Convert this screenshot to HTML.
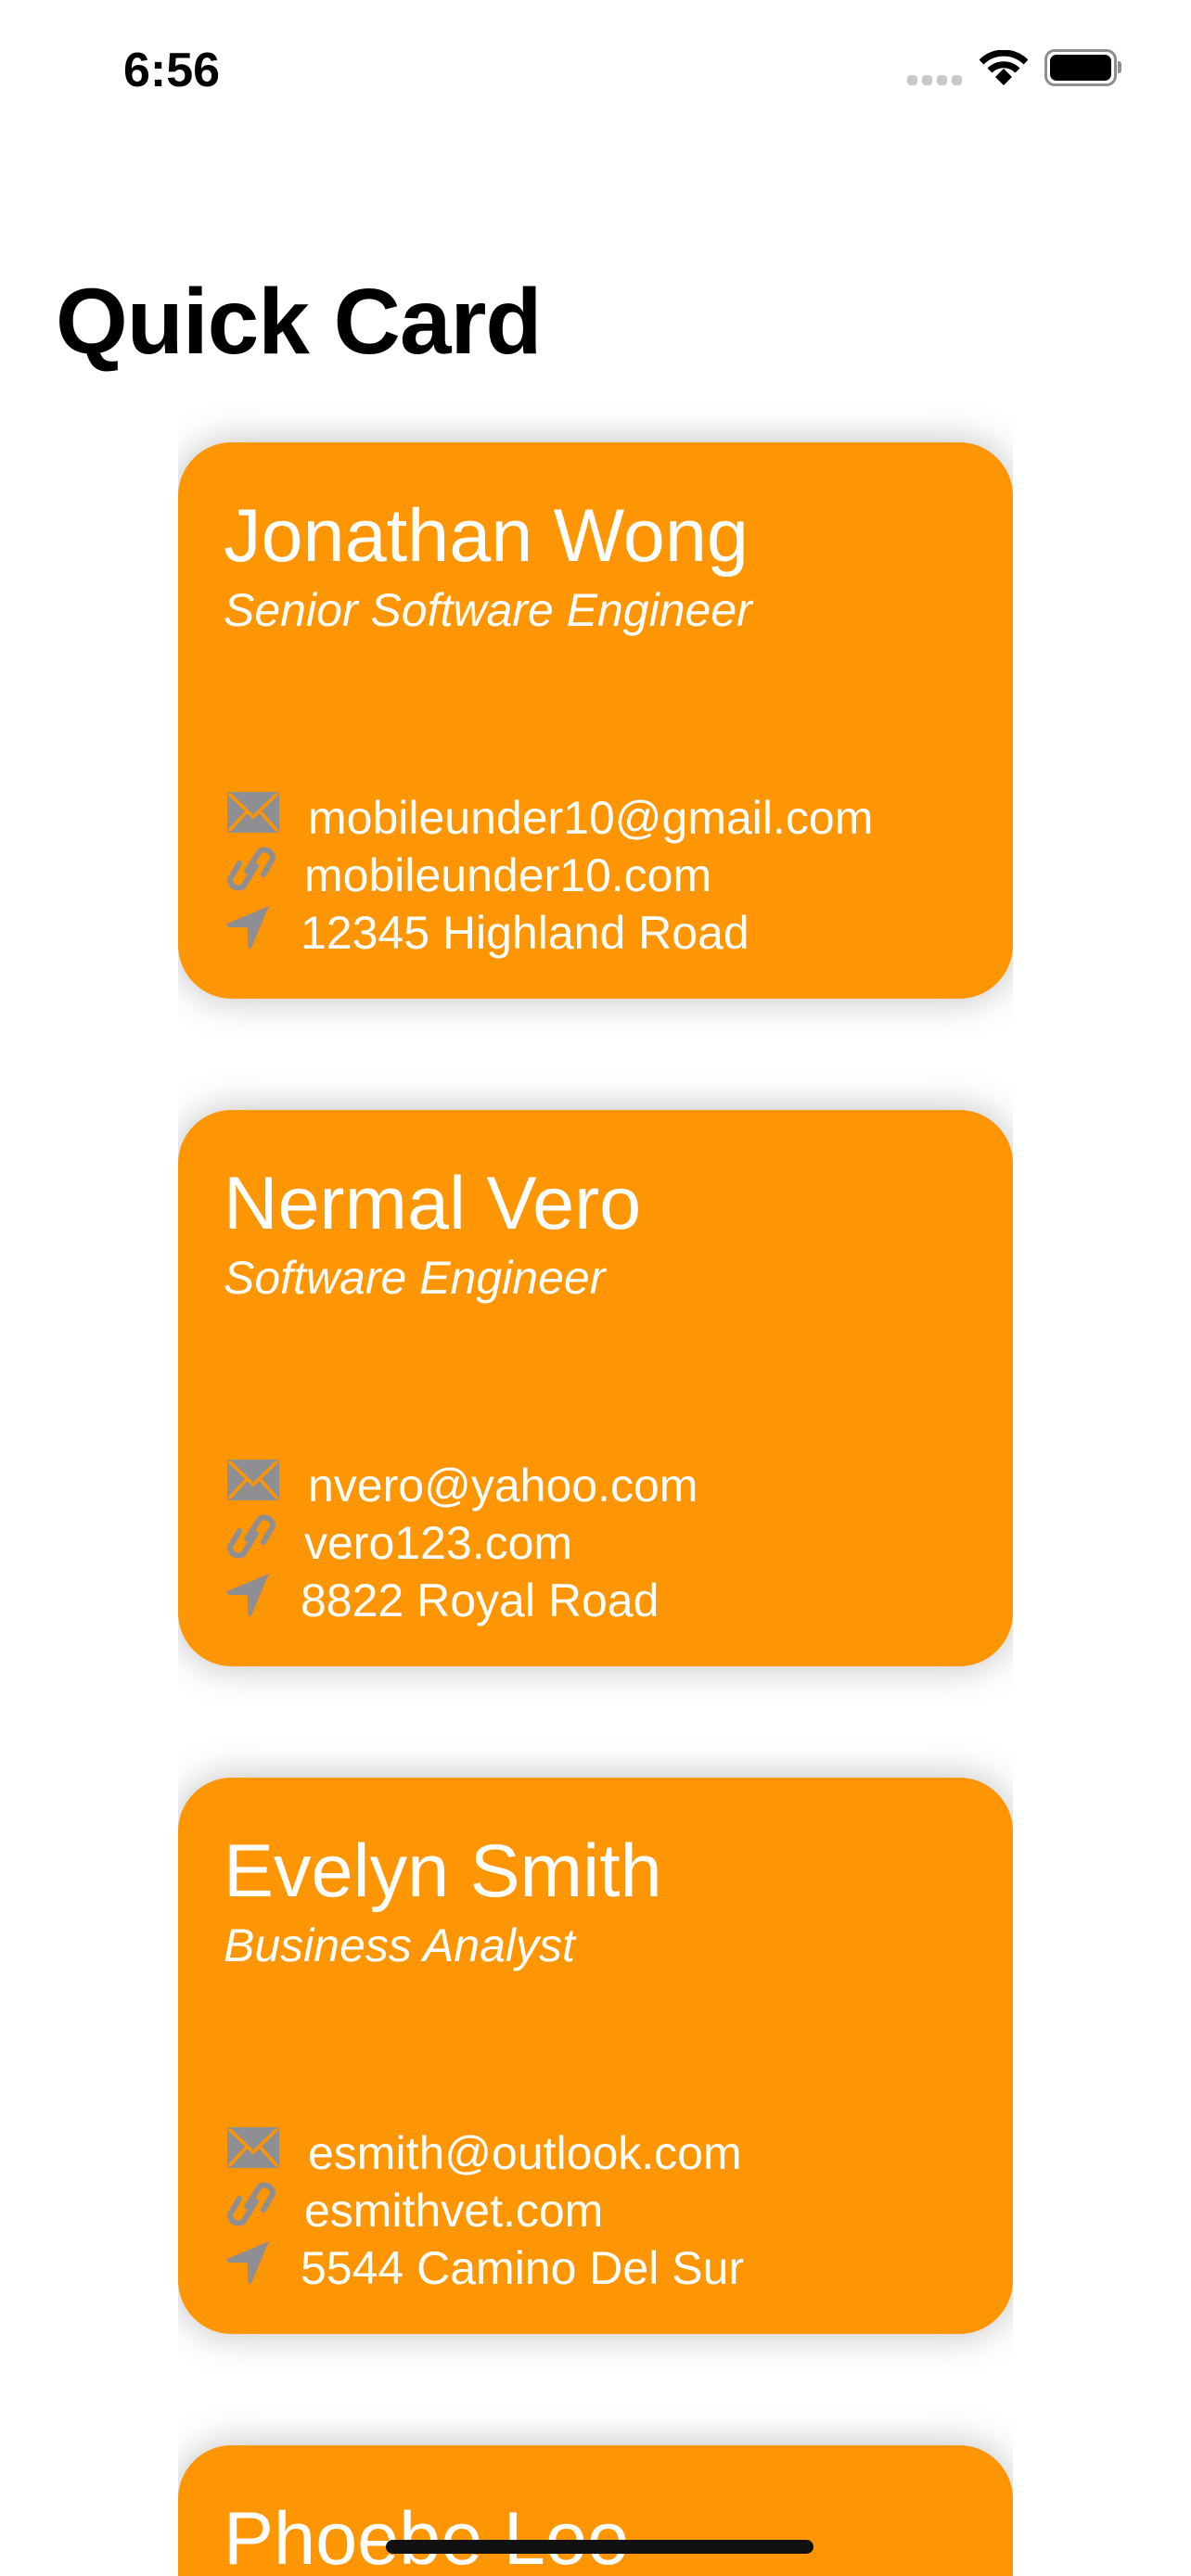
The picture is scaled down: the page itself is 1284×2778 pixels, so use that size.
<!DOCTYPE html>
<html><head><meta charset="utf-8">
<style>
html,body{margin:0;padding:0;background:#fff;width:1284px;height:2778px;overflow:hidden;}
body{position:relative;font-family:"Liberation Sans",sans-serif;}
.abs{position:absolute;}
.time{left:133px;top:46px;font-size:52px;font-weight:bold;letter-spacing:0;line-height:60px;color:#000;}
.title{left:60px;top:292px;font-size:100px;font-weight:bold;line-height:110px;color:#000;letter-spacing:-1px;}
.wrap{position:absolute;left:192px;width:900px;height:720px;overflow:hidden;}
.card{position:absolute;left:0;top:60px;width:900px;height:600px;background:#fe9502;border-radius:58px;box-shadow:0 0 42px rgba(0,0,0,0.26);color:#fff;}
.name{position:absolute;left:49px;top:56px;font-size:81px;line-height:90px;white-space:nowrap;}
.sub{position:absolute;left:49px;top:151px;font-size:50px;font-style:italic;line-height:60px;white-space:nowrap;}
.line{position:absolute;font-size:50px;line-height:60px;white-space:nowrap;}
.ic{position:absolute;}
</style></head><body>
<div class="abs time">6:56</div>
<div class="abs" style="left:978px;top:81px;width:11px;height:11px;border-radius:4px;background:#c8c8c8"></div>
<div class="abs" style="left:994px;top:81px;width:11px;height:11px;border-radius:4px;background:#c8c8c8"></div>
<div class="abs" style="left:1010px;top:81px;width:11px;height:11px;border-radius:4px;background:#c8c8c8"></div>
<div class="abs" style="left:1026px;top:81px;width:11px;height:11px;border-radius:4px;background:#c8c8c8"></div>
<svg class="abs" style="left:1056px;top:54px" width="52" height="38" viewBox="0 0 52 38">
<path d="M2 13 A34 34 0 0 1 50 13" stroke="#000" stroke-width="7" fill="none"/>
<path d="M11 22 A21 21 0 0 1 41 22" stroke="#000" stroke-width="7" fill="none"/>
<path d="M17 29 L26 20 L35 29 L26 38 Z" fill="#000"/>
</svg>
<div class="abs" style="left:1126px;top:53px;width:72px;height:34px;border:3px solid #8e8e8e;border-radius:11px;"></div>
<div class="abs" style="left:1132px;top:59px;width:66px;height:28px;background:#000;border-radius:7px;"></div>
<div class="abs" style="left:1205px;top:66px;width:4px;height:13px;background:#8e8e8e;border-radius:0 3px 3px 0;"></div>
<div class="abs title">Quick Card</div>

<div class="wrap" style="top:417px"><div class="card">
<div class="name">Jonathan Wong</div><div class="sub">Senior Software Engineer</div>
<svg class="ic" style="left:53px;top:377px" width="56" height="44" viewBox="0 0 56 44"><rect x="0" y="0" width="56" height="44" rx="3" fill="#8e8e93"/><path d="M2 2 L28 27 L54 2 M2 42 L21 21 M54 42 L35 21" stroke="#fe9502" stroke-width="3.5" fill="none"/></svg>
<svg class="ic" style="left:52px;top:433px" width="54" height="54" viewBox="0 0 54 54"><g fill="none" stroke="#8e8e93" stroke-width="6" stroke-linecap="round"><path d="M22 30 L36 8 A9 9 0 0 1 50 16 L40 33"/><path d="M32 24 L18 46 A9 9 0 0 1 4 38 L14 21"/></g></svg>
<svg class="ic" style="left:51px;top:498px" width="50" height="50" viewBox="0 0 50 50"><path d="M47 2 L2 21 Q0 24 4 25 L21 25 Q24 25 24 28 L24 45 Q25 49 28 47 Z" fill="#8e8e93"/></svg>
<div class="line" style="left:140px;top:375px">mobileunder10@gmail.com</div>
<div class="line" style="left:136px;top:437px">mobileunder10.com</div>
<div class="line" style="left:132px;top:499px">12345 Highland Road</div>
</div></div>

<div class="wrap" style="top:1137px"><div class="card">
<div class="name">Nermal Vero</div><div class="sub">Software Engineer</div>
<svg class="ic" style="left:53px;top:377px" width="56" height="44" viewBox="0 0 56 44"><rect x="0" y="0" width="56" height="44" rx="3" fill="#8e8e93"/><path d="M2 2 L28 27 L54 2 M2 42 L21 21 M54 42 L35 21" stroke="#fe9502" stroke-width="3.5" fill="none"/></svg>
<svg class="ic" style="left:52px;top:433px" width="54" height="54" viewBox="0 0 54 54"><g fill="none" stroke="#8e8e93" stroke-width="6" stroke-linecap="round"><path d="M22 30 L36 8 A9 9 0 0 1 50 16 L40 33"/><path d="M32 24 L18 46 A9 9 0 0 1 4 38 L14 21"/></g></svg>
<svg class="ic" style="left:51px;top:498px" width="50" height="50" viewBox="0 0 50 50"><path d="M47 2 L2 21 Q0 24 4 25 L21 25 Q24 25 24 28 L24 45 Q25 49 28 47 Z" fill="#8e8e93"/></svg>
<div class="line" style="left:140px;top:375px">nvero@yahoo.com</div>
<div class="line" style="left:136px;top:437px">vero123.com</div>
<div class="line" style="left:132px;top:499px">8822 Royal Road</div>
</div></div>

<div class="wrap" style="top:1857px"><div class="card">
<div class="name">Evelyn Smith</div><div class="sub">Business Analyst</div>
<svg class="ic" style="left:53px;top:377px" width="56" height="44" viewBox="0 0 56 44"><rect x="0" y="0" width="56" height="44" rx="3" fill="#8e8e93"/><path d="M2 2 L28 27 L54 2 M2 42 L21 21 M54 42 L35 21" stroke="#fe9502" stroke-width="3.5" fill="none"/></svg>
<svg class="ic" style="left:52px;top:433px" width="54" height="54" viewBox="0 0 54 54"><g fill="none" stroke="#8e8e93" stroke-width="6" stroke-linecap="round"><path d="M22 30 L36 8 A9 9 0 0 1 50 16 L40 33"/><path d="M32 24 L18 46 A9 9 0 0 1 4 38 L14 21"/></g></svg>
<svg class="ic" style="left:51px;top:498px" width="50" height="50" viewBox="0 0 50 50"><path d="M47 2 L2 21 Q0 24 4 25 L21 25 Q24 25 24 28 L24 45 Q25 49 28 47 Z" fill="#8e8e93"/></svg>
<div class="line" style="left:140px;top:375px">esmith@outlook.com</div>
<div class="line" style="left:136px;top:437px">esmithvet.com</div>
<div class="line" style="left:132px;top:499px">5544 Camino Del Sur</div>
</div></div>

<div class="wrap" style="top:2577px;height:201px"><div class="card">
<div class="name">Phoebe Loo</div>
</div></div>

<div class="abs" style="left:416px;top:2739px;width:461px;height:15px;border-radius:8px;background:#111;"></div>
</body></html>
